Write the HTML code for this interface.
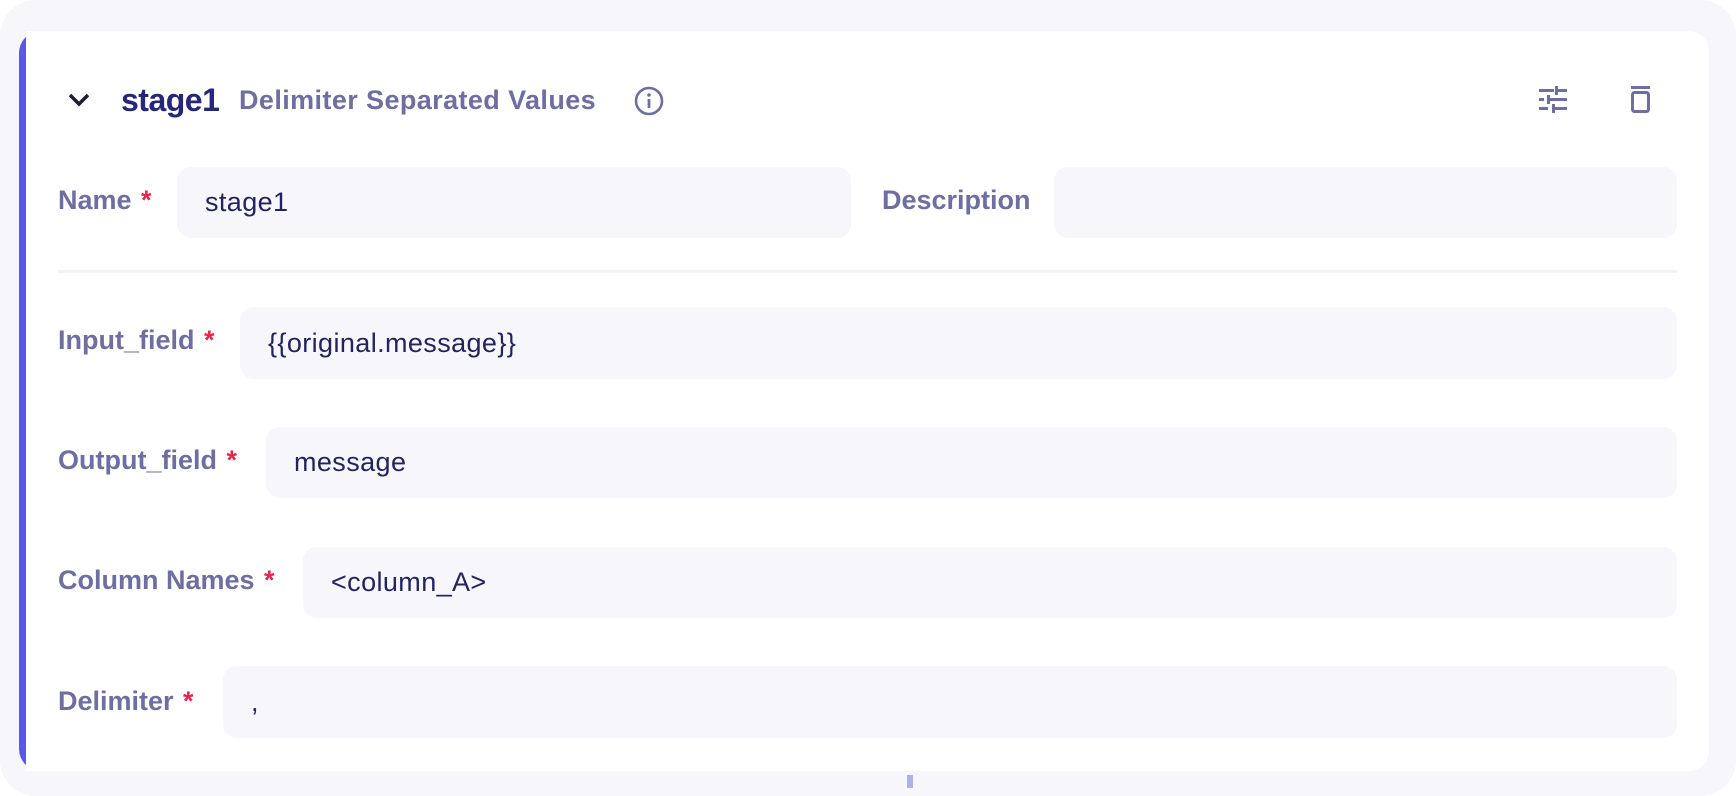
<!DOCTYPE html>
<html><head><meta charset="utf-8"><style>
*{box-sizing:border-box;margin:0;padding:0}
body{width:1736px;height:796px;background:#fff;font-family:"Liberation Sans",sans-serif;position:relative;overflow:hidden}
.outer{position:absolute;left:0;top:0;width:1736px;height:796px;background:#f6f6fb;border-radius:36px}
.card{position:absolute;left:26px;top:31px;width:1683px;height:740px;background:#fff;border-radius:0 20px 20px 0}
.bl{position:absolute;left:19px;top:31px;width:30px;height:740px;border-left:7px solid #5b57e8;border-radius:22px 0 0 22px;background:#fff}
.t{position:absolute;white-space:nowrap}
.lab{font-size:27px;font-weight:bold;color:#6e6ea0;letter-spacing:0}
.lab b{color:#e3264f;margin-left:2px}
.in{position:absolute;background:#f6f6fb;border-radius:14px;font-size:27px;color:#23235e;padding-left:28px;display:flex;align-items:center;letter-spacing:0.4px}
</style></head><body>
<div class="outer"></div>
<div class="bl"></div>
<div class="card"></div>
<svg class="t" style="left:66px;top:90px" width="26" height="20" viewBox="0 0 26 20"><path d="M4 5 L13 14 L22 5" stroke="#1e1e2e" stroke-width="3.5" fill="none"/></svg>
<div class="t" style="left:121px;top:82px;font-size:32px;font-weight:bold;color:#26267a;letter-spacing:-0.5px">stage1</div>
<div class="t" style="left:239px;top:85px;font-size:27px;font-weight:bold;color:#6e6ea0;letter-spacing:0.4px">Delimiter Separated Values</div>
<svg class="t" style="left:633px;top:85px" width="32" height="32" viewBox="0 0 32 32"><circle cx="16" cy="16" r="13" stroke="#6e6ea0" stroke-width="2.6" fill="none"/><rect x="14.6" y="14" width="2.8" height="9" fill="#6e6ea0"/><circle cx="16" cy="10" r="1.8" fill="#6e6ea0"/></svg>
<svg class="t" style="left:1538px;top:85px" width="30" height="30" viewBox="0 0 30 30" fill="#6e6ea0"><rect x="1" y="4" width="15" height="3"/><rect x="20" y="4" width="9" height="3"/><rect x="17" y="1" width="3" height="9"/><rect x="1" y="13" width="5" height="3"/><rect x="9" y="10" width="3" height="9"/><rect x="12" y="13" width="17" height="3"/><rect x="1" y="22" width="9" height="3"/><rect x="14" y="22" width="15" height="3"/><rect x="14" y="19" width="3" height="9"/></svg>
<svg class="t" style="left:1628px;top:84px" width="26" height="30" viewBox="0 0 26 30"><rect x="3" y="2" width="19" height="3" fill="#6e6ea0"/><rect x="4.5" y="8.5" width="16" height="19" rx="2" stroke="#6e6ea0" stroke-width="3" fill="none"/></svg>

<div class="t lab" style="left:58px;top:185px">Name <b>*</b></div>
<div class="in" style="left:177px;top:167px;width:674px;height:71px">stage1</div>
<div class="t lab" style="left:882px;top:185px">Description</div>
<div class="in" style="left:1054px;top:167px;width:623px;height:71px"></div>
<div class="t" style="left:58px;top:270px;width:1619px;height:3px;background:#f2f2f7"></div>

<div class="t lab" style="left:58px;top:325px">Input_field <b>*</b></div>
<div class="in" style="left:240px;top:307px;width:1437px;height:72px">{{original.message}}</div>
<div class="t lab" style="left:58px;top:445px">Output_field <b>*</b></div>
<div class="in" style="left:266px;top:427px;width:1411px;height:71px">message</div>
<div class="t lab" style="left:58px;top:565px">Column Names <b>*</b></div>
<div class="in" style="left:303px;top:547px;width:1374px;height:71px">&lt;column_A&gt;</div>
<div class="t lab" style="left:58px;top:686px">Delimiter <b>*</b></div>
<div class="in" style="left:223px;top:666px;width:1454px;height:72px">,</div>
<div class="t" style="left:907px;top:775px;width:6px;height:13px;background:#b0b0e8"></div>
</body></html>
